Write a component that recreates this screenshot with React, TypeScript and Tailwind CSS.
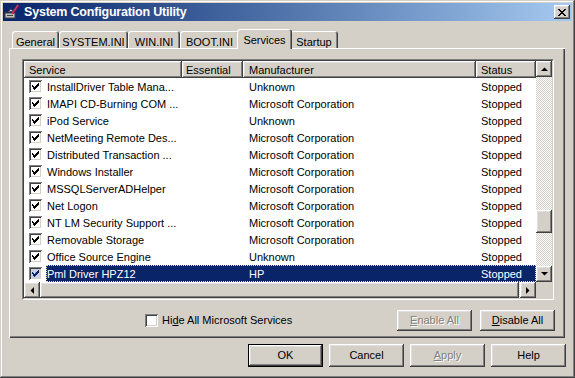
import React from 'react';

const font = "font-['Liberation_Sans',Arial,sans-serif]";

interface Service {
  name: string;
  maker: string;
}

const services: Service[] = [
  { name: 'InstallDriver Table Mana...', maker: 'Unknown' },
  { name: 'IMAPI CD-Burning COM ...', maker: 'Microsoft Corporation' },
  { name: 'iPod Service', maker: 'Unknown' },
  { name: 'NetMeeting Remote Des...', maker: 'Microsoft Corporation' },
  { name: 'Distributed Transaction ...', maker: 'Microsoft Corporation' },
  { name: 'Windows Installer', maker: 'Microsoft Corporation' },
  { name: 'MSSQLServerADHelper', maker: 'Microsoft Corporation' },
  { name: 'Net Logon', maker: 'Microsoft Corporation' },
  { name: 'NT LM Security Support ...', maker: 'Microsoft Corporation' },
  { name: 'Removable Storage', maker: 'Microsoft Corporation' },
  { name: 'Office Source Engine', maker: 'Unknown' },
  { name: 'Pml Driver HPZ12', maker: 'HP' },
];

const tabs = [
  { label: 'General', w: 'w-[47px]' },
  { label: 'SYSTEM.INI', w: 'w-[69px]' },
  { label: 'WIN.INI', w: 'w-[52px]' },
  { label: 'BOOT.INI', w: 'w-[59px]' },
  { label: 'Services', w: 'w-[55px]', active: true },
  { label: 'Startup', w: 'w-[48px]' },
];

// classic raised 3D edge
const raised =
  'bg-[#d4d0c8] shadow-[inset_-1px_-1px_0_#404040,inset_1px_1px_0_#ffffff,inset_-2px_-2px_0_#808080,inset_2px_2px_0_#dfdfdf]';

function CheckBox({ checked, selected }: { checked?: boolean; selected?: boolean }) {
  return (
    <div
      className={`w-[13px] h-[13px] flex items-center justify-center shrink-0 shadow-[inset_1px_1px_0_#808080,inset_-1px_-1px_0_#ffffff,inset_2px_2px_0_#404040,inset_-2px_-2px_0_#d4d0c8] ${
        selected ? 'bg-[#c9cee2]' : 'bg-white'
      }`}
    >
      {checked && (
        <svg width="7" height="7" viewBox="0 0 7 7" shapeRendering="crispEdges">
          <path
            d="M0 2h1v1h1v1h1V3h1V2h1V1h1V0h1v3h-1v1h-1v1h-1v1h-1v1h-1V6h-1V5H1V4H0z"
            fill={selected ? '#0a246a' : '#000'}
          />
        </svg>
      )}
    </div>
  );
}

function Arrow({ dir }: { dir: 'up' | 'down' | 'left' | 'right' }) {
  const pts = {
    up: '0,4 7,4 3.5,0.5',
    down: '0,0 7,0 3.5,3.5',
    left: '4,0 4,7 0.5,3.5',
    right: '0,0 0,7 3.5,3.5',
  }[dir];
  const vert = dir === 'up' || dir === 'down';
  return (
    <div className={`w-[16px] h-[16px] shrink-0 flex items-center justify-center ${raised}`}>
      <svg width={vert ? 7 : 4} height={vert ? 4 : 7} viewBox={vert ? '0 0 7 4' : '0 0 4 7'}>
        <polygon points={pts} fill="#000" />
      </svg>
    </div>
  );
}

function Button({
  children,
  w,
  disabled,
  isDefault,
}: {
  children: React.ReactNode;
  w: string;
  disabled?: boolean;
  isDefault?: boolean;
}) {
  return (
    <div className={`${w} h-[23px] ${isDefault ? 'border border-black' : ''} flex`}>
      <div
        className={`flex-1 flex items-center justify-center text-[11px] ${raised} ${
          disabled ? 'text-[#808080] [text-shadow:1px_1px_0_#ffffff]' : 'text-black'
        }`}
      >
        {children}
      </div>
    </div>
  );
}

function TitleIcon() {
  return (
    <svg width="16" height="16" viewBox="0 0 16 16">
      <rect x="1" y="9" width="10" height="5" fill="#c0c0c0" stroke="#404040" strokeWidth="1" />
      <rect x="3" y="11" width="6" height="1" fill="#404040" />
      <path d="M4 8 L7 5 L9 7 Z" fill="#e0e0e0" stroke="#404040" strokeWidth="0.8" />
      <line x1="8" y1="10" x2="14" y2="1" stroke="#e0306a" strokeWidth="1.6" />
      <line x1="9" y1="10" x2="15" y2="2" stroke="#a0104a" strokeWidth="0.8" />
    </svg>
  );
}

export default function App() {
  return (
    <div
      className={`${font} w-[575px] h-[378px] p-[3px] bg-[#d4d0c8] text-black text-[11px] shadow-[inset_-1px_-1px_0_#404040,inset_1px_1px_0_#d4d0c8,inset_-2px_-2px_0_#808080,inset_2px_2px_0_#ffffff] overflow-hidden`}
    >
      {/* Title bar */}
      <div className="h-[18px] flex items-center bg-linear-to-r from-[#0a246a] to-[#a6caf0] pl-[1px] pr-[2px]">
        <TitleIcon />
        <span className="ml-[4px] text-white font-bold text-[12.5px] tracking-[-0.2px]">
          System Configuration Utility
        </span>
        <div className={`ml-auto w-[16px] h-[14px] flex items-center justify-center ${raised}`}>
          <svg width="8" height="7" viewBox="0 0 8 7" shapeRendering="crispEdges">
            <path
              d="M0 0h2v1h1v1h2V1h1V0h2v1H7v1H6v1H5v1h1v1h1v1h1v1H6V6H5V5H3v1H2v1H0V6h1V5h1V4h1V3H2V2H1V1H0z"
              fill="#000"
            />
          </svg>
        </div>
      </div>

      {/* Tabs */}
      <div className="flex items-end h-[19px] mt-[8px] ml-[9px]">
        {tabs.map((t) =>
          t.active ? (
            <div
              key={t.label}
              className={`${t.w} h-[20px] -mx-[2px] -mb-[1px] relative z-10 bg-[#d4d0c8] rounded-t-[3px] shadow-[inset_1px_1px_0_#ffffff,inset_-1px_0_0_#404040,inset_-2px_0_0_#808080] flex items-start justify-center pt-[3px]`}
            >
              {t.label}
            </div>
          ) : (
            <div
              key={t.label}
              className={`${t.w} h-[17px] bg-[#d4d0c8] rounded-t-[3px] shadow-[inset_1px_1px_0_#ffffff,inset_-1px_0_0_#404040,inset_-2px_0_0_#808080] flex items-start justify-center pt-[3px]`}
            >
              {t.label}
            </div>
          )
        )}
      </div>

      {/* Tab panel */}
      <div className="ml-[6px] w-[556px] h-[290px] pt-[11px] pl-[13px] bg-[#d4d0c8] shadow-[inset_1px_1px_0_#ffffff,inset_-1px_-1px_0_#404040,inset_-2px_-2px_0_#808080]">
        {/* List view */}
        <div className="w-[532px] h-[241px] border border-t-[#808080] border-l-[#808080] border-r-white border-b-white">
          <div className="w-full h-full border border-t-[#404040] border-l-[#404040] border-r-[#d4d0c8] border-b-[#d4d0c8] bg-white flex flex-col">
            <div className="flex h-[221px]">
              <div className="w-[512px] flex flex-col overflow-hidden">
                {/* Header */}
                <div className="flex h-[17px] shrink-0">
                  <div className={`w-[158px] pl-[5px] pt-[1px] flex items-center ${raised}`}>Service</div>
                  <div className={`w-[61px] pl-[4px] pt-[1px] flex items-center ${raised}`}>Essential</div>
                  <div className={`w-[233px] pl-[6px] pt-[1px] flex items-center ${raised}`}>Manufacturer</div>
                  <div className={`w-[60px] pl-[5px] pt-[1px] flex items-center ${raised}`}>Status</div>
                </div>
                {/* Rows */}
                {services.map((s, i) => {
                  const sel = i === services.length - 1;
                  return (
                    <div key={s.name} className="flex h-[17px] shrink-0 items-center">
                      <div className="w-[22px] pl-[5px] flex items-center">
                        <CheckBox checked selected={sel} />
                      </div>
                      <div
                        className={`flex h-full items-center flex-1 pt-[1px] ${
                          sel ? 'bg-[#0a246a] text-white border border-dotted border-[#e8e4b0]' : 'border border-transparent'
                        }`}
                      >
                        <div className="w-[135px] whitespace-nowrap overflow-hidden">{s.name}</div>
                        <div className="w-[61px]" />
                        <div className="w-[233px] pl-[6px] whitespace-nowrap">{s.maker}</div>
                        <div className="w-[58px] pl-[5px]">Stopped</div>
                      </div>
                    </div>
                  );
                })}
              </div>
              {/* Vertical scrollbar */}
              <div className="w-[16px] flex flex-col bg-[image:repeating-conic-gradient(#d4d0c8_0_25%,#ffffff_0_50%)] bg-[length:2px_2px]">
                <Arrow dir="up" />
                <div className="flex-1 flex flex-col">
                  <div className="h-[133px]" />
                  <div className={`h-[23px] ${raised}`} />
                </div>
                <Arrow dir="down" />
              </div>
            </div>
            {/* Horizontal scrollbar */}
            <div className="flex h-[16px]">
              <div className="w-[512px] flex bg-[image:repeating-conic-gradient(#d4d0c8_0_25%,#ffffff_0_50%)] bg-[length:2px_2px]">
                <Arrow dir="left" />
                <div className={`flex-1 mr-[1px] ${raised}`} />
                <Arrow dir="right" />
              </div>
              <div className="w-[16px] bg-[#d4d0c8]" />
            </div>
          </div>
        </div>

        {/* Panel bottom row */}
        <div className="flex items-center h-[21px] mt-[10px] w-[533px]">
          <div className="ml-[123px] flex items-center gap-[4px]">
            <CheckBox />
            <span>
              Hi<span className="underline">d</span>e All Microsoft Services
            </span>
          </div>
          <div className="ml-auto flex gap-[8px]">
            <div className="w-[75px] h-[21px] flex">
              <div className={`flex-1 flex items-center justify-center text-[#808080] [text-shadow:1px_1px_0_#ffffff] ${raised}`}>
                <span>
                  <span className="underline">E</span>nable All
                </span>
              </div>
            </div>
            <div className="w-[75px] h-[21px] flex">
              <div className={`flex-1 flex items-center justify-center ${raised}`}>
                <span>
                  <span className="underline">D</span>isable All
                </span>
              </div>
            </div>
          </div>
        </div>
      </div>

      {/* Dialog buttons */}
      <div className="flex justify-end gap-[6px] mt-[6px] pr-[6px]">
        <Button w="w-[75px]" isDefault>
          OK
        </Button>
        <Button w="w-[75px]">Cancel</Button>
        <Button w="w-[75px]" disabled>
          <span>
            <span className="underline">A</span>pply
          </span>
        </Button>
        <Button w="w-[75px]">Help</Button>
      </div>
    </div>
  );
}
